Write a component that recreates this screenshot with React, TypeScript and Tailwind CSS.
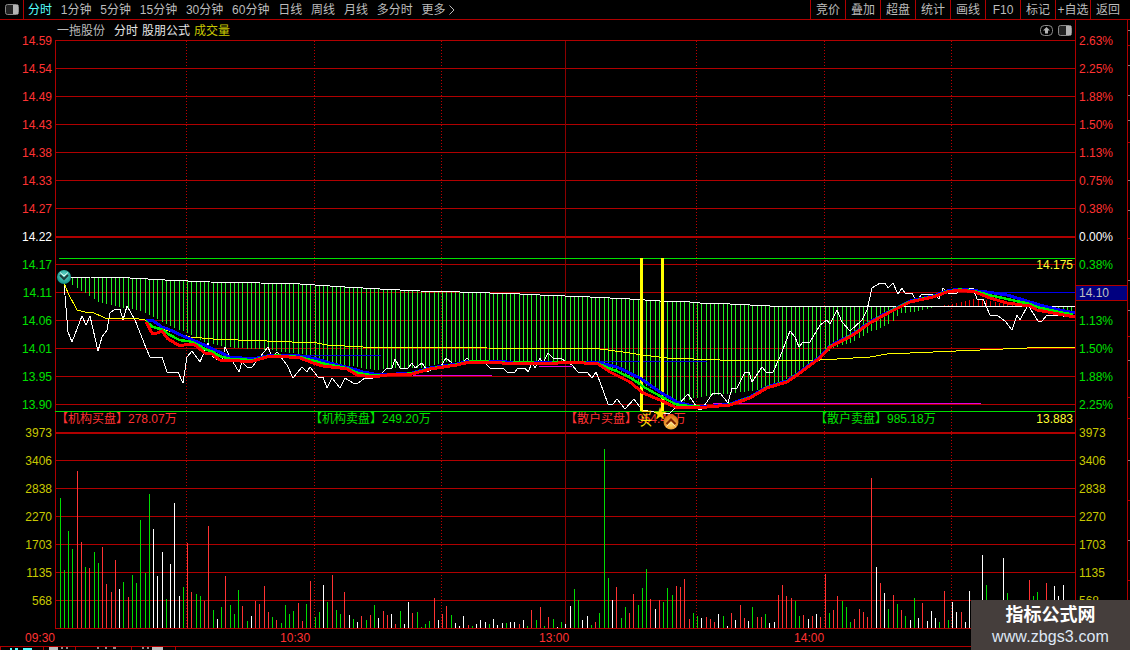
import React from "react";

type Pt = [number, number];

const gridColor = "#b00000";

const leftTabs = ["1分钟", "5分钟", "15分钟", "30分钟", "60分钟", "日线", "周线", "月线", "多分时"];
const rightTabs = ["竞价", "叠加", "超盘", "统计", "画线", "F10", "标记", "+自选", "返回"];

const prices: [string, string][] = [
  ["14.59", "text-[#ff3232]"], ["14.54", "text-[#ff3232]"], ["14.49", "text-[#ff3232]"], ["14.43", "text-[#ff3232]"],
  ["14.38", "text-[#ff3232]"], ["14.33", "text-[#ff3232]"], ["14.27", "text-[#ff3232]"], ["14.22", "text-white"],
  ["14.17", "text-[#00e000]"], ["14.11", "text-[#00e000]"], ["14.06", "text-[#00e000]"], ["14.01", "text-[#00e000]"],
  ["13.95", "text-[#00e000]"], ["13.90", "text-[#00e000]"],
];
const percents: [string, string][] = [
  ["2.63%", "text-[#ff3232]"], ["2.25%", "text-[#ff3232]"], ["1.88%", "text-[#ff3232]"], ["1.50%", "text-[#ff3232]"],
  ["1.13%", "text-[#ff3232]"], ["0.75%", "text-[#ff3232]"], ["0.38%", "text-[#ff3232]"], ["0.00%", "text-white"],
  ["0.38%", "text-[#00e000]"], ["14.10", "box"], ["1.13%", "text-[#00e000]"], ["1.50%", "text-[#00e000]"],
  ["1.88%", "text-[#00e000]"], ["2.25%", "text-[#00e000]"],
];
const volumes = ["3973", "3406", "2838", "2270", "1703", "1135", "568"];

// 每分钟一根量柱: 颜色 + 高度
const volData = (
  "g130 g58 g97 g79 r157 r86 g61 r60 g76 g65 r81 r44 r36 r68 w39 g46 r31 g53 g45 g108 g55 g134 w99 w52 w76 g29 w64 w125 w32 g41 " +
  "r85 r36 g34 g32 r27 r102 g18 w9 g21 r52 g23 g14 g38 r22 g7 w12 r27 r24 r42 r16 g11 r8 g5 g23 g14 g17 r25 " +
  "r7 g24 r47 g11 g16 w43 g26 r53 g18 g14 r36 w13 g9 w6 r12 g8 r13 g23 w10 r17 r13 w14 r4 g17 w4 w26 r15 g16 g1 g4 g7 r30 w8 r14 r22 g13 " +
  "w5 w2 w12 r3 g2 w4 w8 w6 g4 w9 w3 w5 g5 w6 w6 r4 w8 g2 r18 g8 r21 g2 r11 g9 w1 g6 w4 w22 g39 g28 w8 w12 g3 r6 g15 g179 g50 w28 r41 g10 " +
  "g21 r15 r34 g23 g40 g59 r29 w19 r28 g26 g40 g33 r42 r41 r49 r9 g15 g12 " +
  "w10 r11 r9 r6 w14 g12 w2 r15 w8 r23 r10 w7 g21 r11 r11 g14 w5 w6 r33 r43 r32 r30 g27 g12 r13 w9 r12 w14 r11 r54 g15 r18 r32 g27 g21 g6 " +
  "r9 r19 r16 r11 r150 w61 r45 w35 g19 r33 g24 r18 g12 w8 g30 w10 r25 w7 w17 w10 g6 r37 g8 w26 w16 r16 w6 w37 " +
  "w20 w20 w73 g43 g20 r20 g20 w70 g35 g20 r20 w20 w20 r48 g32 g36 w20 r45 g20 w42 w32 w43 g20 w20 w66"
).split(" ");

const barX = (i: number) => Math.round(59.67 + i * 4.25);

const interp = (pts: Pt[], x: number) => {
  if (x <= pts[0][0]) return pts[0][1];
  for (let k = 1; k < pts.length; k++) {
    if (x <= pts[k][0]) {
      const [x0, y0] = pts[k - 1];
      const [x1, y1] = pts[k];
      return y0 + ((y1 - y0) * (x - x0)) / (x1 - x0);
    }
  }
  return pts[pts.length - 1][1];
};

const toPoints = (pts: Pt[]) => pts.map((p) => p.join(",")).join(" ");

const pricePts: Pt[] = [
  [64, 283], [68, 332], [72, 342], [82, 316], [86, 325], [90, 316], [98, 351], [102, 337], [107, 330], [110, 313], [115, 309], [120, 309],
  [123, 320], [127, 306], [135, 320], [146, 348], [150, 357], [162, 357], [167, 372], [178, 372], [183, 383], [187, 357], [192, 351], [200, 362],
  [208, 343], [213, 357], [222, 362], [225, 347], [230, 357], [239, 372], [242, 362], [247, 367], [252, 367], [268, 347], [272, 357], [277, 352],
  [287, 365], [293, 378], [302, 367], [307, 372], [310, 367], [318, 377], [323, 377], [327, 388], [332, 378], [340, 388], [345, 378], [353, 383],
  [358, 383], [365, 378], [373, 378], [380, 375], [387, 368], [392, 368], [395, 359], [400, 368], [408, 368], [412, 363], [415, 368], [422, 363],
  [428, 372], [433, 368], [440, 368], [446, 358], [452, 363], [462, 363], [467, 358], [472, 363], [485, 363], [490, 368], [503, 368], [507, 372],
  [515, 372], [518, 368], [525, 368], [528, 372], [532, 363], [535, 368], [540, 358], [543, 363], [548, 353], [553, 358], [560, 358], [572, 365],
  [578, 372], [587, 372], [592, 378], [596, 372], [600, 382], [608, 404], [613, 404], [617, 399], [625, 409], [634, 399], [642, 410], [660, 413],
  [670, 413], [678, 405], [688, 394], [698, 409], [702, 409], [713, 393], [720, 393], [728, 403], [732, 388], [737, 388], [745, 372], [749, 372],
  [752, 382], [762, 367], [766, 372], [773, 372], [780, 357], [790, 331], [795, 337], [799, 347], [803, 342], [810, 342], [820, 325], [827, 320],
  [830, 324], [837, 310], [842, 322], [850, 331], [862, 320], [867, 310], [872, 288], [880, 283], [885, 283], [888, 288], [893, 283], [898, 294],
  [902, 288], [905, 293], [912, 293], [915, 299], [918, 299], [922, 294], [935, 294], [939, 299], [943, 288], [948, 293], [957, 293], [960, 288],
  [973, 288], [977, 299], [983, 299], [990, 315], [997, 315], [1005, 321], [1012, 330], [1017, 315], [1020, 320], [1028, 305], [1038, 321],
  [1042, 321], [1047, 315], [1057, 315], [1075, 318],
];

const avgPts: Pt[] = [
  [64, 283], [68, 293], [77, 310], [85, 312], [92, 312], [105, 318], [117, 319], [133, 318], [145, 320], [153, 327], [173, 332], [190, 337], [213, 339],
  [238, 340], [267, 341], [317, 343], [327, 345], [363, 347], [407, 347], [487, 348], [600, 349], [623, 352], [643, 355], [667, 358], [720, 360], [820, 360],
  [870, 357], [887, 354], [933, 352], [980, 350], [1027, 348], [1075, 347],
];

const redPts: Pt[] = [
  [146, 322], [152, 333], [157, 333], [162, 331], [168, 339], [180, 346], [188, 344], [195, 345], [205, 353], [212, 354], [220, 360], [240, 361], [253, 361],
  [267, 357], [277, 356], [300, 358], [313, 363], [323, 366], [340, 368], [347, 369], [357, 375], [373, 377], [387, 375], [412, 374], [430, 369], [457, 365],
  [470, 362], [497, 362], [507, 364], [520, 363], [547, 364], [570, 362], [598, 364], [610, 372], [630, 382], [643, 393], [660, 400], [675, 407], [707, 407],
  [730, 405], [750, 398], [767, 388], [787, 382], [800, 373], [820, 358], [830, 347], [853, 335], [870, 323], [890, 312], [910, 302], [933, 297], [947, 292],
  [960, 290], [975, 292], [990, 298], [1007, 303], [1030, 306], [1037, 310], [1053, 313], [1075, 317],
];

const bluePts: Pt[] = [
  [146, 320], [152, 320], [162, 327], [168, 329], [183, 336], [200, 343], [230, 357], [253, 359], [267, 356], [277, 355], [300, 356], [317, 359], [330, 363],
  [350, 368], [363, 372], [380, 375], [412, 373], [430, 368], [457, 364], [470, 361], [507, 362], [547, 362], [577, 362], [600, 363], [617, 367], [640, 378],
  [660, 392], [677, 402], [693, 406], [707, 407], [730, 404], [750, 397], [767, 387], [787, 381], [800, 372], [820, 357], [830, 346], [853, 334], [870, 322],
  [890, 311], [910, 301], [933, 296], [947, 291], [960, 289], [987, 292], [1007, 295], [1027, 301], [1040, 305], [1060, 310], [1075, 313],
];

const midPts: Pt[] = [];
for (let x = 146; x <= 1075; x += 3) {
  midPts.push([x, (interp(redPts, x) + interp(bluePts, x)) / 2]);
}

const topEnv: Pt[] = [
  [66, 277], [90, 277], [130, 278], [165, 280], [210, 282], [260, 283], [300, 284], [330, 286], [345, 287], [380, 289], [420, 291], [460, 292], [490, 293],
  [520, 294], [540, 295], [565, 296], [590, 297], [630, 299], [660, 301], [690, 302], [700, 303], [730, 304], [770, 306], [1075, 306],
];

const lowEnv: Pt[] = [
  [72, 285], [85, 293], [100, 303], [120, 307], [140, 311], [155, 318], [170, 326], [185, 332], [205, 342], [225, 347], [240, 348], [268, 350], [293, 353],
  [307, 355], [333, 363], [375, 370], [392, 368], [422, 368], [447, 362], [600, 363], [610, 368], [625, 377], [640, 383], [660, 393], [680, 403], [693, 398],
  [760, 390], [773, 387], [787, 378], [800, 370], [820, 357], [833, 348], [853, 342], [867, 333], [880, 328], [892, 322], [900, 313], [913, 312], [927, 309],
  [937, 307], [942, 305], [948, 305], [952, 304], [957, 303], [961, 302], [965, 301], [969, 300], [973, 299], [986, 300], [994, 302], [1002, 303], [1011, 305],
  [1019, 306], [1025, 307], [1050, 309], [1075, 312],
];

const hLines = [40, 68, 96, 124, 152, 180, 208, 264, 292, 320, 348, 376, 404, 460, 488, 516, 544, 572, 600, 628];
const dotted = [186, 314, 441, 696, 824, 951];

const volColor = (c: string) => (c === "g" ? "#00dc00" : c === "w" ? "#ffffff" : "#ff3232");

const PanelIcon = () => (
  <svg width="14" height="11" viewBox="0 0 14 11">
    <rect x="0.5" y="0.5" width="13" height="10" rx="2" fill="#222" stroke="#8a8a8a" />
    <rect x="8" y="1" width="5" height="9" fill="#b4b4b4" />
  </svg>
);

const UpIcon = () => (
  <svg width="13" height="11" viewBox="0 0 13 11">
    <rect x="0.5" y="0.5" width="12" height="10" rx="4" fill="none" stroke="#8a8a8a" />
    <path d="M6.5 2 L10 5.5 H8 V8.5 H5 V5.5 H3 Z" fill="#b4b4b4" />
  </svg>
);

const PlotSvg = () => (
  <svg width="1020" height="589" viewBox="55 40 1020 589" className="block">
    <defs>
      <radialGradient id="teal" cx="50%" cy="40%" r="60%">
        <stop offset="0%" stopColor="#6fe0d0" />
        <stop offset="100%" stopColor="#0e8f86" />
      </radialGradient>
    </defs>
    <g shapeRendering="crispEdges">
      <line x1="55.5" y1="40" x2="55.5" y2="629" stroke={gridColor} />
      {hLines.map((y) => (
        <line key={y} x1="55" x2="1075" y1={y + 0.5} y2={y + 0.5} stroke={gridColor} />
      ))}
      <rect x="55" y="236" width="1020" height="2" fill={gridColor} />
      <rect x="55" y="432" width="1020" height="2" fill={gridColor} />
      {dotted.map((x) => (
        <line key={x} x1={x + 0.5} x2={x + 0.5} y1="41" y2="628" stroke="#c00000" strokeDasharray="1 2" />
      ))}
      <line x1="565.5" x2="565.5" y1="41" y2="628" stroke="#8c0000" />
      <line x1="59" x2="1075" y1="258.5" y2="258.5" stroke="#00e000" />
      <line x1="55" x2="1075" y1="411.5" y2="411.5" stroke="#00e000" />

      {volData.map((v, i) => {
        const h = Number(v.slice(1));
        return <rect key={i} x={barX(i)} y={628 - h} width="1" height={h} fill={volColor(v[0])} />;
      })}

      {Array.from({ length: 237 }, (_, k) => k + 3).map((i) => {
        const x = barX(i);
        const top = Math.round(interp(topEnv, x));
        const low = Math.round(interp(lowEnv, x));
        const isUp = low < top;
        return (
          <rect
            key={i}
            x={x}
            y={Math.min(top, low)}
            width="1"
            height={Math.abs(low - top)}
            fill={isUp ? "#f00000" : "#22f022"}
          />
        );
      })}

      <line x1="413" x2="492" y1="375.5" y2="375.5" stroke="#e000e0" />
      <line x1="539" x2="572" y1="366.5" y2="366.5" stroke="#e000e0" />
      <line x1="713" x2="981" y1="403.5" y2="403.5" stroke="#e000e0" />
      <line x1="290" x2="381" y1="355.5" y2="355.5" stroke="#0000e0" />
      <line x1="575" x2="707" y1="361.5" y2="361.5" stroke="#0000e0" />
      <line x1="976" x2="1075" y1="292.5" y2="292.5" stroke="#0000f0" />

      <polyline points={toPoints(topEnv)} fill="none" stroke="#ffffff" />
      <polyline points={toPoints(pricePts)} fill="none" stroke="#ffffff" />
      <polyline points={toPoints(avgPts)} fill="none" stroke="#ffff00" />

      <rect x="640" y="258" width="3" height="153" fill="#ffff00" />
      <rect x="661" y="258" width="3" height="153" fill="#ffff00" />

      <polyline points={toPoints(bluePts)} fill="none" stroke="#0000ff" strokeWidth="3" />
      <polyline points={toPoints(midPts)} fill="none" stroke="#00f000" strokeWidth="2.5" />
      <polyline points={toPoints(redPts)} fill="none" stroke="#ff0000" strokeWidth="3" />
    </g>

    <circle cx="64" cy="277" r="7" fill="url(#teal)" />
    <path d="M60 275 L64 279 L68 275" fill="none" stroke="#1c3a3a" strokeWidth="2" />
    <path d="M60 272.5 L64 276 L68 272.5" fill="none" stroke="#e8fff8" strokeWidth="1" />
  </svg>
);

export default function App() {
  return (
    <div className="relative flex h-[650px] w-[1130px] flex-col overflow-hidden bg-black font-['Liberation_Sans','Noto_Sans_CJK_SC',sans-serif] text-[12px] leading-[14px] text-[#bcbcbc]">
      <div className="flex h-[20px] shrink-0 items-stretch border-b border-[#b00000]">
        <div className="flex w-[24px] items-center justify-center border-r border-[#b00000]">
          <PanelIcon />
        </div>
        <div className="flex items-center gap-[8.8px] pl-[4px]">
          <span className="text-[#54ffff]">分时</span>
          {leftTabs.map((t) => (
            <span key={t}>{t}</span>
          ))}
          <span className="flex items-center gap-[3px]">
            更多
            <svg width="6" height="10" viewBox="0 0 6 10">
              <path d="M0.5 0.5 L5 5 L0.5 9.5" fill="none" stroke="#bcbcbc" />
            </svg>
          </span>
        </div>
        <div className="ml-auto flex pr-[5px]">
          {rightTabs.map((t) => (
            <span key={t} className="flex w-[35px] items-center justify-center border-l border-[#b00000]">
              {t}
            </span>
          ))}
        </div>
      </div>

      <div className="flex flex-1">
        <div className="flex w-[1075px] flex-col">
          <div className="flex h-[20px] items-center pl-[57px] pr-[3px] pt-[1px]">
            <span>一拖股份</span>
            <span className="ml-[9px] text-[#e6e6e6]">分时</span>
            <span className="ml-[4px] text-[#e6e6e6]">股朋公式</span>
            <span className="ml-[4px] text-[#c8c800]">成交量</span>
            <div className="ml-auto flex items-center gap-[5px]">
              <UpIcon />
              <PanelIcon />
            </div>
          </div>

          <div className="flex h-[589px]">
            <div className="z-10 -mt-[13px] flex w-[55px] flex-col items-end pr-[3px]">
              {prices.map(([p, c]) => (
                <div key={p} className={`flex h-[28px] items-center ${c}`}>
                  {p}
                </div>
              ))}
              {volumes.map((v) => (
                <div key={v} className="flex h-[28px] items-center text-[#c8c800]">
                  {v}
                </div>
              ))}
            </div>

            <div className="relative w-[1020px]">
              <PlotSvg />
              <span className="absolute left-[1px] top-[372px] text-[#ff3232]">【机构买盘】278.07万</span>
              <span className="absolute left-[255px] top-[372px] text-[#00e000]">【机构卖盘】249.20万</span>
              <span className="absolute left-[510px] top-[372px] text-[#ff3232]">【散户买盘】954.47万</span>
              <span className="absolute left-[760px] top-[372px] text-[#00e000]">【散户卖盘】985.18万</span>
              <span className="absolute right-[2px] top-[218px] text-[#ffff32]">14.175</span>
              <span className="absolute right-[2px] top-[372px] text-[#ffff32]">13.883</span>
              <span className="absolute left-[585px] top-[368px] origin-top scale-y-150 text-[#ffe000]">买</span>
              <span className="absolute left-[598px] top-[366px] text-[14px] text-[#ffd800]">★</span>
              <svg className="absolute left-[608px] top-[374px]" width="16" height="16" viewBox="663 414 16 16">
                <defs>
                  <radialGradient id="amber" cx="50%" cy="70%" r="65%">
                    <stop offset="0%" stopColor="#ffd860" />
                    <stop offset="100%" stopColor="#d86a10" />
                  </radialGradient>
                </defs>
                <circle cx="671" cy="422" r="7.5" fill="url(#amber)" />
                <path d="M666.5 424 L671 419.5 L675.5 424" fill="none" stroke="#7a2000" strokeWidth="2" />
                <path d="M666.5 426.5 L671 422.5 L675.5 426.5" fill="none" stroke="#fff0c0" strokeWidth="1" />
              </svg>
            </div>
          </div>

          <div className="flex h-[18px] items-center border-b border-[#b00000] pl-[25px] text-[#ff3232]">
            <span>09:30</span>
            <span className="ml-[225px]">10:30</span>
            <span className="ml-[229px]">13:00</span>
            <span className="ml-[225px]">14:00</span>
          </div>
        </div>

        <div className="flex w-[52px] flex-col border-b border-l border-[#b00000] pt-[7px]">
          {percents.map(([p, c], i) =>
            c === "box" ? (
              <div key={i} className="flex h-[28px] items-center">
                <div className="flex h-[16px] w-full items-center border-y border-[#b00000] bg-[#000080] pl-[3px] text-[#c0c0c0]">
                  {p}
                </div>
              </div>
            ) : (
              <div key={i} className={`flex h-[28px] items-center pl-[3px] ${c}`}>
                {p}
              </div>
            )
          )}
          {volumes.map((v) => (
            <div key={v} className="flex h-[28px] items-center pl-[3px] text-[#c8c800]">
              {v}
            </div>
          ))}
        </div>

        <div className="w-[3px] border-l border-[#b00000]">
          <svg width="2" height="627" className="block">
            {[25, 122, 218, 316, 377, 398, 480, 560].map((y) => (
              <line key={y} x1="0" x2="2" y1={y + 0.5} y2={y + 0.5} stroke="#b00000" />
            ))}
            {[10, 45, 75, 100, 160, 190, 260, 290, 340, 440, 520].map((y) => (
              <line key={y} x1="0" x2="2" y1={y + 0.5} y2={y + 0.5} stroke="#808080" />
            ))}
          </svg>
        </div>
      </div>

      {/* 底部标签栏只露出顶上几个像素 */}
      <div className="flex h-[3px] shrink-0 overflow-hidden">
        <div className="flex w-[43px] gap-[3px] border-l border-[#b00000] pl-[9px] pt-[1px]">
          <span className="h-[2px] w-[2px] bg-[#54ffff]" />
          <span className="h-[2px] w-[3px] bg-[#54ffff]" />
          <span className="ml-[2px] h-[2px] w-[9px] bg-[#54ffff]" />
        </div>
        <div className="flex w-[32px] gap-[3px] border-l border-[#b00000] pl-[5px]">
          <span className="h-[3px] w-[9px] bg-[#bcbcbc]" />
          <span className="h-[2px] w-[2px] bg-[#8a8a8a]" />
          <span className="h-[2px] w-[2px] bg-[#8a8a8a]" />
        </div>
        <div className="flex w-[56px] gap-[6px] border-l border-[#b00000] pl-[21px]">
          <span className="h-[2px] w-[2px] bg-[#8a8a8a]" />
          <span className="h-[2px] w-[2px] bg-[#8a8a8a]" />
          <span className="h-[2px] w-[3px] bg-[#8a8a8a]" />
        </div>
        <div className="flex w-[44px] gap-[3px] border-l border-[#b00000] pl-[10px]">
          <span className="h-[2px] w-[2px] bg-[#8a8a8a]" />
          <span className="h-[2px] w-[2px] bg-[#8a8a8a]" />
          <span className="h-[3px] w-[11px] bg-[#bcbcbc]" />
        </div>
        <div className="flex-1 border-l border-[#b00000]" />
      </div>

      <div className="absolute bottom-0 right-0 flex h-[50px] w-[159px] flex-col items-center bg-[#453e3c]">
        <span className="mt-[3px] text-[18px] font-bold leading-[24px] text-white">指标公式网</span>
        <span className="text-[16px] leading-[20px] tracking-[0.1px] text-[#dfe8f5]">www.zbgs3.com</span>
      </div>
    </div>
  );
}
